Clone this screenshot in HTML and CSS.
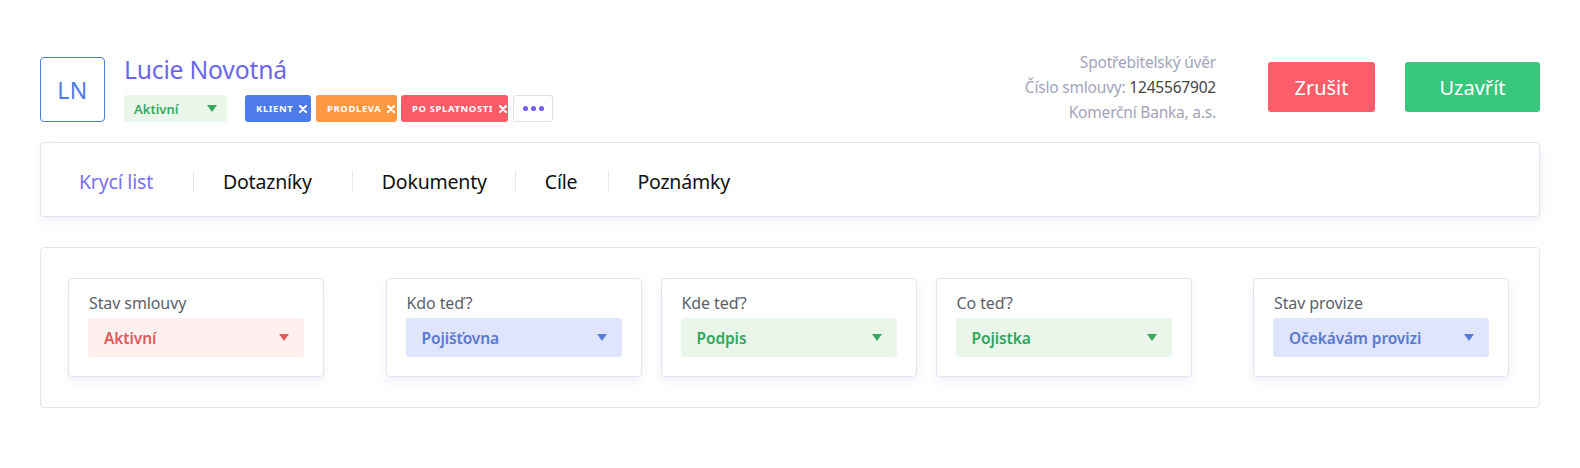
FILE: index.html
```html
<!DOCTYPE html>
<html lang="cs">
<head>
<meta charset="utf-8">
<title>Lucie Novotná</title>
<link rel="stylesheet" href="styles.css">
</head>
<body>
<div class="page">
  <header class="header">
    <div class="avatar">LN</div>
    <div class="who">
      <div class="name">Lucie Novotná</div>
      <div class="who-row">
        <div class="status">Aktivní <span class="tri tri-green"></span></div>
        <div class="tags">
          <span class="tag tag-blue">KLIENT <svg class="x" viewBox="0 0 8 8"><path d="M1 1L7 7M7 1L1 7"/></svg></span>
          <span class="tag tag-orange">PRODLEVA <svg class="x" viewBox="0 0 8 8"><path d="M1 1L7 7M7 1L1 7"/></svg></span>
          <span class="tag tag-red">PO SPLATNOSTI <svg class="x" viewBox="0 0 8 8"><path d="M1 1L7 7M7 1L1 7"/></svg></span>
          <span class="more"><i></i><i></i><i></i></span>
        </div>
      </div>
    </div>
    <div class="info">
      <div>Spotřebitelský úvěr</div>
      <div>Číslo smlouvy: <span class="num">1245567902</span></div>
      <div>Komerční Banka, a.s.</div>
    </div>
    <button class="btn btn-red">Zrušit</button>
    <button class="btn btn-green">Uzavřít</button>
  </header>

  <nav class="nav">
    <a class="tab active">Krycí list</a>
    <a class="tab">Dotazníky</a>
    <a class="tab">Dokumenty</a>
    <a class="tab">Cíle</a>
    <a class="tab">Poznámky</a>
  </nav>

  <section class="panel">
    <div class="field">
      <div class="label">Stav smlouvy</div>
      <div class="select sel-red">Aktivní <span class="tri tri-red"></span></div>
    </div>
    <div class="group">
      <div class="field">
        <div class="label">Kdo teď?</div>
        <div class="select sel-blue">Pojišťovna <span class="tri tri-blue"></span></div>
      </div>
      <div class="field">
        <div class="label">Kde teď?</div>
        <div class="select sel-green">Podpis <span class="tri tri-green"></span></div>
      </div>
      <div class="field">
        <div class="label">Co teď?</div>
        <div class="select sel-green">Pojistka <span class="tri tri-green"></span></div>
      </div>
    </div>
    <div class="field">
      <div class="label">Stav provize</div>
      <div class="select sel-blue">Očekávám provizi <span class="tri tri-blue"></span></div>
    </div>
  </section>
</div>
</body>
</html>
```

FILE: styles.css
```css
* { box-sizing: border-box; }
html, body { margin: 0; padding: 0; background: #fff; }
body {
  font-family: "Noto Sans", "Open Sans", sans-serif;
  color: #222;
}
.page {
  padding: 53px 40px 0 40px;
}

/* header */
.header {
  display: flex;
  align-items: flex-start;
  height: 69px;
}
.avatar {
  width: 65px;
  height: 65px;
  margin-top: 4px;
  border: 1px solid #4f7be3;
  border-radius: 4px;
  color: #4f7be3;
  font-size: 23px;
  display: flex;
  align-items: center;
  justify-content: center;
  letter-spacing: 0.5px;
}
.who {
  margin-left: 19px;
  margin-top: 0;
  flex: 1;
}
.name {
  color: #6c66ee;
  font-size: 24.7px;
  line-height: 33px;
  letter-spacing: -0.2px;
}
.who-row {
  display: flex;
  align-items: center;
  margin-top: 9px;
}
.status {
  width: 103px;
  height: 27px;
  background: #ebf6ea;
  border-radius: 3px;
  color: #3aa75f;
  font-weight: 600;
  font-size: 13px;
  display: flex;
  align-items: center;
  justify-content: space-between;
  padding: 0 10px 0 10px;
}
.tri {
  display: inline-block;
  width: 0;
  height: 0;
  border-left: 5px solid transparent;
  border-right: 5px solid transparent;
  border-top: 7px solid currentColor;
}
.tri-green { color: #38a860; }
.tri-red { color: #e35a5a; }
.tri-blue { color: #5b7ad6; }

.tags {
  display: flex;
  margin-left: 18px;
  gap: 5px;
}
.tag {
  height: 27px;
  border-radius: 3px;
  color: #fff;
  font-size: 9.5px;
  font-weight: 700;
  letter-spacing: 0.6px;
  display: flex;
  align-items: center;
  justify-content: space-between;
  white-space: nowrap;
  padding: 0 8px 0 11px;
}
.tag .x {
  width: 8px;
  height: 8px;
  margin-left: 6px;
  flex: none;
  stroke: #fff;
  stroke-width: 2.1;
  stroke-linecap: round;
  fill: none;
}
.tag-blue { background: #4d7ce8; width: 66px; }
.tag-orange { background: #fe9843; width: 81px; }
.tag-red { background: #fd5b68; width: 107px; margin-left: -1px; }
.more {
  width: 40px;
  height: 27px;
  border: 1px solid #dfe0ee;
  border-radius: 3px;
  display: flex;
  align-items: center;
  justify-content: center;
  gap: 3px;
}
.more i {
  width: 5px;
  height: 5px;
  border-radius: 50%;
  background: #6c5ff0;
}

.info {
  text-align: right;
  color: #a2a4ba;
  font-size: 15.5px;
  line-height: 24.8px;
  margin-top: -3px;
  letter-spacing: -0.2px;
}
.info .num { color: #444; }
.btn {
  border: 0;
  border-radius: 3px;
  color: #fff;
  font-family: inherit;
  font-size: 20px;
  height: 50px;
  margin-top: 9px;
}
.btn-red { background: #fd5c6a; width: 107px; margin-left: 52px; }
.btn-green { background: #38c77c; width: 135px; margin-left: 30px; }

/* nav */
.nav {
  margin-top: 20px;
  height: 75px;
  border: 1px solid #e3e4ef;
  border-radius: 4px;
  box-shadow: 0 3px 10px rgba(200, 204, 230, 0.3);
  display: flex;
  align-items: center;
  padding-left: 9px;
  padding-top: 4px;
}
.tab {
  font-size: 19.5px;
  color: #111;
  padding: 0 40px 0 29px;
  line-height: 21px;
  border-left: 1px solid #e4e5ef;
  letter-spacing: -0.2px;
}
.tab:first-child { border-left: 0; }
.tab:nth-child(3) { padding-right: 28px; }
.tab:nth-child(4) { padding-right: 31px; }
.tab:nth-child(5) { padding-left: 28px; }
.tab.active { color: #7b70f2; }

/* panel */
.panel {
  margin-top: 30px;
  border: 1px solid #e3e4ef;
  border-radius: 4px;
  padding: 30px 30px 30px 27px;
  display: flex;
  justify-content: space-between;
}
.group {
  display: flex;
  gap: 19px;
}
.field {
  width: 256px;
  height: 99px;
  border: 1px solid #e2e4f2;
  border-radius: 4px;
  box-shadow: 0 4px 10px rgba(210, 214, 235, 0.35);
  padding: 14px 19px 0 19px;
}
.label {
  color: #5b5f6a;
  font-size: 16px;
  line-height: 21px;
  margin-left: 1px;
  letter-spacing: -0.1px;
}
.select {
  margin-top: 4px;
  height: 39px;
  border-radius: 3px;
  font-size: 15.5px;
  font-weight: 600;
  display: flex;
  align-items: center;
  justify-content: space-between;
  padding: 0 15px 0 16px;
  letter-spacing: -0.1px;
}
.sel-red { background: #fff0f0; color: #e25a5a; }
.sel-blue { background: #dee5fc; color: #5b79d2; }
.sel-green { background: #ebf6ea; color: #2fa85b; }
```
